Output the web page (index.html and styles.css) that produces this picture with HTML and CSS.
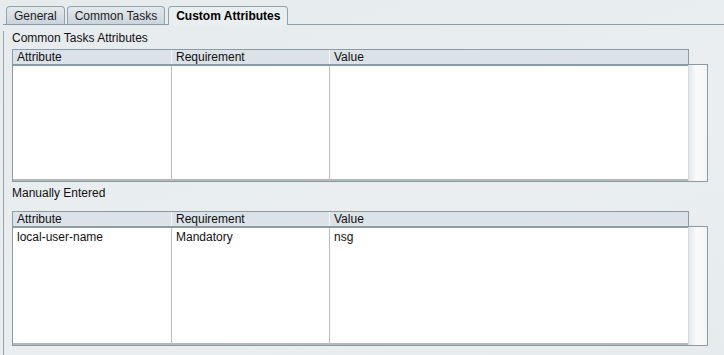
FILE: index.html
```html
<!DOCTYPE html>
<html lang="en">
<head>
  <meta charset="UTF-8">
  <title>Custom Attributes</title>
  <link rel="stylesheet" href="styles.css">
</head>
<body>
  <div class="tabbar">
    <div class="tab">General</div>
    <div class="tab">Common Tasks</div>
    <div class="tab active">Custom Attributes</div>
  </div>

  <div class="panel">
    <!-- Common Tasks Attributes -->
    <div class="label first">Common Tasks Attributes</div>
    <div class="grid">
      <div class="thead">
        <div class="col c1">Attribute</div>
        <div class="col c2">Requirement</div>
        <div class="col c3">Value</div>
      </div>
      <div class="tbody short">
        <div class="rows">
          <div class="col c1"></div>
          <div class="col c2"></div>
          <div class="col c3"></div>
        </div>
        <div class="scroll"></div>
      </div>
    </div>

    <!-- Manually Entered -->
    <div class="label second">Manually Entered</div>
    <div class="grid">
      <div class="thead">
        <div class="col c1">Attribute</div>
        <div class="col c2">Requirement</div>
        <div class="col c3">Value</div>
      </div>
      <div class="tbody tall">
        <div class="rows">
          <div class="col c1">local-user-name</div>
          <div class="col c2">Mandatory</div>
          <div class="col c3">nsg</div>
        </div>
        <div class="scroll"></div>
      </div>
    </div>
  </div>
</body>
</html>
```

FILE: styles.css
```css
* {
  box-sizing: border-box;
  margin: 0;
  padding: 0;
  font-family: "Liberation Sans", Arial, sans-serif;
}

body {
  background: linear-gradient(160deg, #e6ebee 0%, #eaeef1 60%, #e6ebee 100%);
  color: #111;
  font-size: 12px;
  width: 724px;
  height: 355px;
  overflow: hidden;
}

.tabbar {
  display: flex;
  align-items: flex-end;
  gap: 2px;
  height: 25px;
  padding-left: 3px;
  margin-left: 3px;
  border-bottom: 1px solid #8c9da7;
  position: relative;
  z-index: 1;
}

.tab {
  height: 18px;
  padding: 0 7px;
  line-height: 18px;
  border: 1px solid #93a3ad;
  border-bottom: none;
  border-radius: 4px 4px 0 0;
  background: linear-gradient(#e4eaee, #c9d4db);
  color: #1c1c1c;
}

.tab.active {
  height: 19px;
  margin-bottom: -1px;
  margin-left: 1px;
  padding: 0 7px;
  font-weight: bold;
  background: #e9eef1;
  color: #000;
  line-height: 18px;
}

.panel {
  margin-left: 3px;
  height: 330px;
  border-left: 1px solid #95a4ad;
  padding-left: 8px;
}

.label {
  height: 14px;
  line-height: 14px;
}

.label.first {
  margin-top: 6px;
  margin-bottom: 4px;
}

.label.second {
  margin-top: 4px;
  margin-bottom: 11px;
}

.grid {
  width: 696px;
}

.thead {
  display: flex;
  width: 677px;
  height: 16px;
  border: 1px solid #8a9ba5;
  background: #dbe2e8;
  line-height: 14px;
}

.thead .col {
  border-right: 1px solid #f4f6f8;
  padding-left: 4px;
}

.thead .col.c3 {
  border-right: none;
}

.c1 {
  width: 159px;
}

.c2 {
  width: 158px;
}

.c3 {
  flex: 1;
}

.tbody {
  display: flex;
  margin-top: -1px;
  border: 1px solid #8a9ba5;
  background: #fff;
  box-shadow: inset 0 -2px 0 #b4b8ba;
}

.tbody.short {
  height: 118px;
}

.tbody.tall {
  height: 120px;
}

.rows {
  flex: 1;
  display: flex;
  border-top: 1px solid #8a9ba5;
}

.rows .col {
  border-right: 1px solid #bdbdbd;
  padding: 2px 0 0 4px;
  line-height: 14px;
  height: 100%;
}

.rows .col.c3 {
  border-right: none;
}

.scroll {
  width: 19px;
  border-left: 1px solid #d6dadc;
  background: linear-gradient(to right, #e3e7e9, #fbfbfb 40%, #f4f4f4);
}
```
